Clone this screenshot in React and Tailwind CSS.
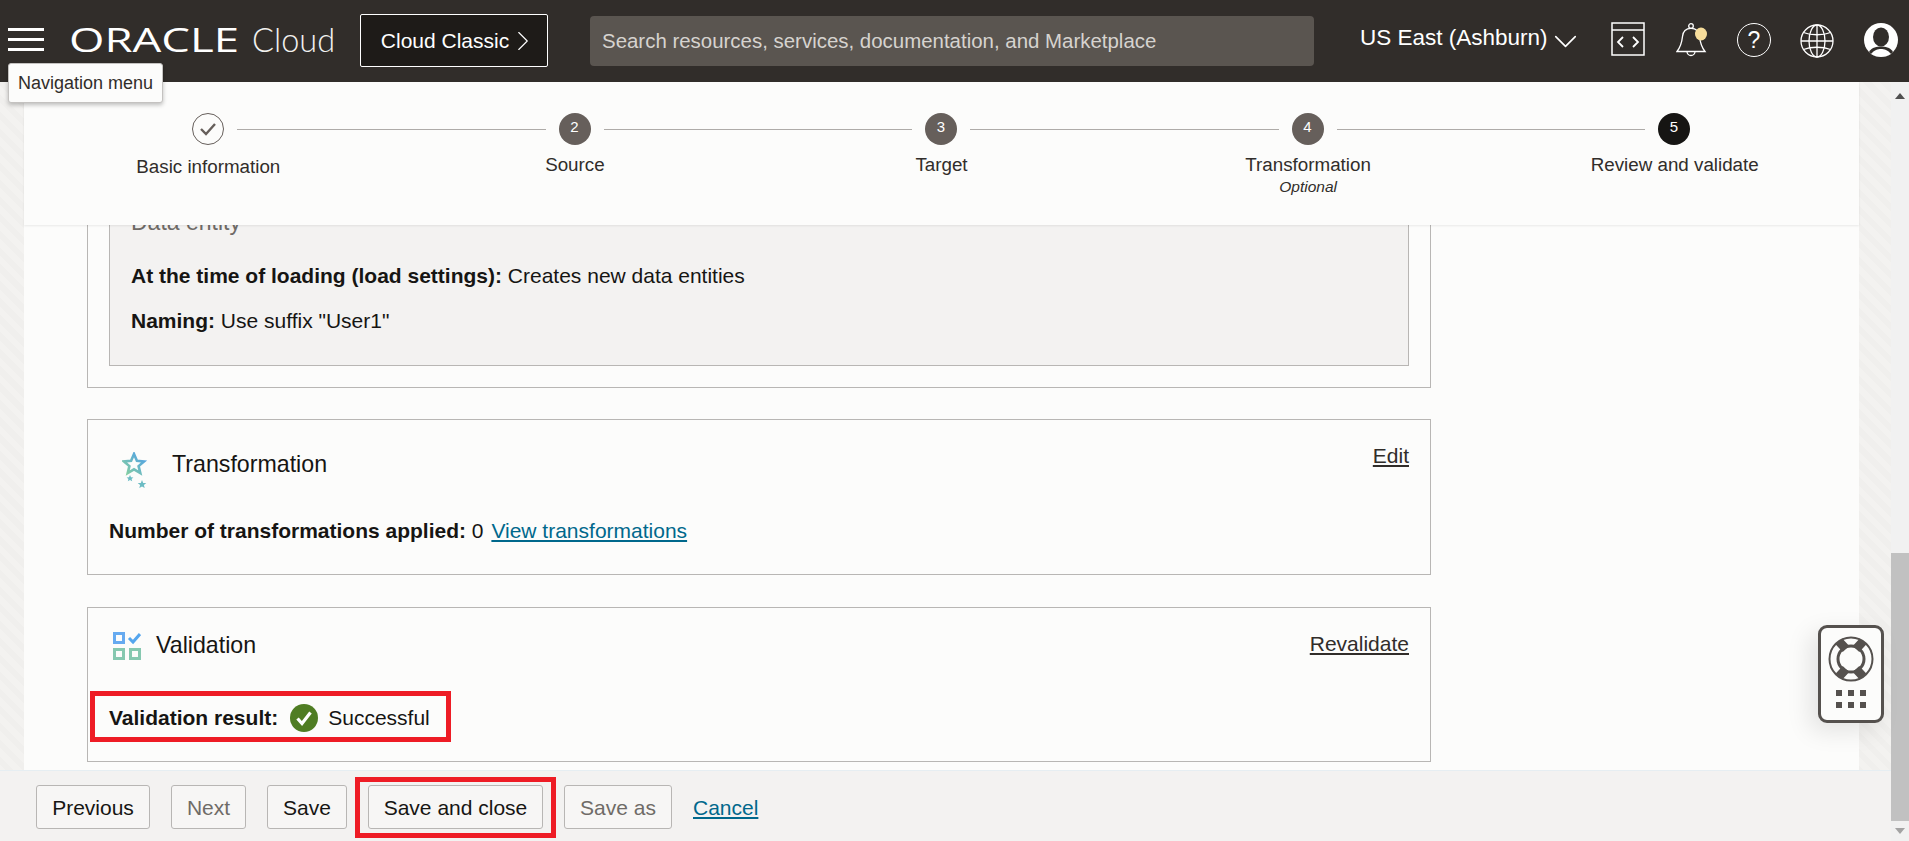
import { ChevronDown, ChevronRight } from "lucide-react";

const STEPS = [
	{ label: "Basic information", done: true },
	{ label: "Source", num: 2 },
	{ label: "Target", num: 3 },
	{ label: "Transformation", num: 4, sub: "Optional" },
	{ label: "Review and validate", num: 5, current: true },
];

function StepCircle({ step }) {
	if (step.done) {
		return (
			<div className="w-8 h-8 shrink-0 rounded-full border border-[#665f5b] flex items-center justify-center">
				<svg width="18" height="14" viewBox="0 0 18 14" fill="none">
					<path d="M2 7l5 5 9-10" stroke="#665f5b" strokeWidth="2.4" />
				</svg>
			</div>
		);
	}
	return (
		<div
			className={`w-8 h-8 shrink-0 rounded-full flex items-center justify-center text-[15px] pb-[3px] ${
				step.current ? "bg-[#161513] text-white" : "bg-[#665f5b] text-white"
			}`}>
			{step.num}
		</div>
	);
}

function Stepper() {
	return (
		<div className="h-[143px] shrink-0 bg-[#fcfcfb] shadow-[0_1px_2px_rgba(0,0,0,0.08)] relative z-10">
			<div className="flex items-center pl-[168px] pr-[169px] pt-[31px]">
				{STEPS.map((step, i) => (
					<div key={step.label} className={`flex items-center ${i < 4 ? "flex-1" : ""}`}>
						<StepCircle step={step} />
						{i < 4 && <div className="flex-1 h-px bg-[#aeaba8] mx-[13px] mt-[1px]" />}
					</div>
				))}
			</div>
			<div className="grid grid-cols-5 w-[1833px] ml-[1px] mt-[8px] text-[18.8px] leading-[24px] text-[#312d2a] text-center">
				{STEPS.map((step) => (
					<div key={step.label} className={step.done ? "pt-[2px]" : ""}>
						<div className="whitespace-nowrap">{step.label}</div>
						{step.sub && <div className="text-[15.5px] leading-[20px] italic">{step.sub}</div>}
					</div>
				))}
			</div>
		</div>
	);
}

function StarIcon() {
	return (
		<svg width="28" height="38" viewBox="0 0 28 38" fill="none">
			<defs>
				<linearGradient id="starGrad" x1="0" y1="1" x2="1" y2="0">
					<stop offset="0" stopColor="#86d0a0" />
					<stop offset="1" stopColor="#4f9fe8" />
				</linearGradient>
			</defs>
			<path d="M12 2l2.900 6.700 7.100.7-5.400 4.700 1.700 7-6.300-3.800-6.300 3.800 1.700-7L2 9.400l7.100-.7z" stroke="url(#starGrad)" strokeWidth="2.6" />
			<path d="M8 23l1 2.200 2.400.2-1.800 1.600.6 2.300-2.200-1.300-2.200 1.300.6-2.300-1.800-1.600 2.400-.2z" fill="#6cbcc4" />
			<path d="M20 28l1.200 2.900 3.100.2-2.400 2 .8 3-2.700-1.700-2.700 1.700.8-3-2.400-2 3.100-.2z" fill="#6cbcc4" />
		</svg>
	);
}

function ValidationIcon() {
	return (
		<svg width="28" height="28" viewBox="0 0 28 28" fill="none">
			<rect x="1.500" y="1.500" width="9" height="9" stroke="#66aaf0" strokeWidth="3" />
			<rect x="1.500" y="17.500" width="9" height="9" stroke="#86c8b0" strokeWidth="3" />
			<rect x="17.500" y="17.500" width="9" height="9" stroke="#86c8b0" strokeWidth="3" />
			<path d="M16 6l4 4 7-8" stroke="#55a6ee" strokeWidth="3" />
		</svg>
	);
}

function Card({ className, children }) {
	return <div className={`border border-[#b8b6b4] shrink-0 ${className}`}>{children}</div>;
}

function ReviewContent() {
	return (
		<div className="flex-1 min-h-0 overflow-hidden flex flex-col justify-end pl-[63px] w-[1407px] pb-[8px] text-[21px] text-[#161513]">
			{/* Target section, scrolled up behind the stepper */}
			<Card className="px-[21px] pb-[21px]">
				<div className="bg-[#f3f2f1] border border-[#b8b6b4] h-[300px] px-[21px] flex flex-col justify-end pb-[31px]">
					<div className="text-[23px] leading-[28px] text-[#6f6b67] mb-[27px]">Data entity</div>
					<p className="leading-[26px] mb-[19px]">
						<b>At the time of loading (load settings):</b> Creates new data entities
					</p>
					<p className="leading-[26px]">
						<b>Naming:</b> Use suffix "User1"
					</p>
				</div>
			</Card>

			<Card className="mt-[31px] h-[156px] px-[21px] pt-[30px]">
				<div className="flex items-start">
					<div className="ml-[13px] mr-[22px] h-[38px] mt-[2px]">
						<StarIcon />
					</div>
					<span className="text-[23.2px] leading-[28px]">Transformation</span>
					<a className="ml-auto -mt-[7px] leading-[26px] underline text-[#312d2a]">Edit</a>
				</div>
				<p className="mt-[28px] leading-[26px]">
					<b>Number of transformations applied:</b> 0{" "}
					<a className="underline text-[#00688c] ml-[2px]">View transformations</a>
				</p>
			</Card>

			<Card className="mt-[32px] h-[155px] px-[21px] pt-[24px]">
				<div className="flex items-center h-[28px]">
					<div className="ml-[4px] mr-[15px] h-[28px]">
						<ValidationIcon />
					</div>
					<span className="text-[23.2px] leading-[28px] -mt-[2px]">Validation</span>
					<a className="ml-auto -mt-[4px] leading-[26px] underline text-[#312d2a]">Revalidate</a>
				</div>
				<div className="mt-[45px] flex items-center h-[26px]">
					<b>Validation result:</b>
					<svg className="ml-[12px] mr-[10px]" width="28" height="28" viewBox="0 0 28 28" fill="none">
						<circle cx="14" cy="14" r="14" fill="#4f7d23" />
						<path d="M7.500 14.500l4.500 5 8.500-11" stroke="#fff" strokeWidth="3.200" />
					</svg>
					<span>Successful</span>
				</div>
			</Card>
		</div>
	);
}

function FooterButton({ children, disabled, className }) {
	return (
		<button
			className={`h-[44px] pt-[1px] border border-[#b8b6b4] rounded-[3px] bg-[#f7f6f5] text-[21px] ${
				disabled ? "bg-[#f1efed] text-[#6f6b67]" : "text-[#161513]"
			} ${className}`}>
			{children}
		</button>
	);
}

function HelpWidget() {
	return (
		<div className="absolute left-[1818px] top-[625px] w-[66px] h-[98px] z-20 bg-[#fcfcfb] border-[3px] border-[#55514e] rounded-[9px] shadow-[-8px_8px_24px_rgba(0,0,0,0.1)] flex flex-col items-center pt-[8px]">
			<svg width="46" height="46" viewBox="0 0 46 46" fill="none">
				<circle cx="23" cy="23" r="21.500" stroke="#55514e" strokeWidth="2" />
				<circle cx="23" cy="23" r="13" stroke="#55514e" strokeWidth="3" />
				<path d="M11 5.500 L18 13 M35 5.500 L28 13 M11 40.500 L18 33 M35 40.500 L28 33" stroke="#55514e" strokeWidth="9" />
			</svg>
			<div className="grid grid-cols-3 gap-x-[6px] gap-y-[6px] mt-[8px]">
				{[0, 1, 2, 3, 4, 5].map((n) => (
					<div key={n} className="w-[6px] h-[6px] bg-[#55514e]" />
				))}
			</div>
		</div>
	);
}

function BellIcon() {
	return (
		<svg width="32" height="34" viewBox="0 0 32 34" fill="none" stroke="#fff" strokeWidth="1.300">
			<circle cx="15" cy="3" r="2.300" />
			<path d="M1 28.500C5.500 23 6 18 6.500 13.500 7 8 10.500 5.300 15 5.300S23 8 23.500 13.500C24 18 24.500 23 29 28.500z" />
			<path d="M11 28.500a4 4 0 0 0 8 0" />
			<ellipse cx="25" cy="11" rx="6" ry="6.500" fill="#f7dd9b" stroke="none" />
		</svg>
	);
}

function GlobeIcon() {
	return (
		<svg className="ml-[29px]" width="34" height="34" viewBox="0 0 34 34" fill="none" stroke="#fff" strokeWidth="1.300">
			<circle cx="17" cy="17" r="16" />
			<ellipse cx="17" cy="17" rx="8" ry="16" />
			<path d="M17 1v32M1 17h32" />
			<path d="M3.500 8.500C11 11.500 23 11.500 30.500 8.500M3.500 25.500C11 22.500 23 22.500 30.500 25.500" />
		</svg>
	);
}

function Header() {
	return (
		<header className="h-[82px] shrink-0 bg-[#312d2a] flex items-center text-white relative z-30">
			<div className="ml-[8px] w-[36px] flex flex-col gap-[7px] mt-[-4px]">
				<div className="h-[3px] bg-white" />
				<div className="h-[3px] bg-white" />
				<div className="h-[3px] bg-white" />
			</div>
			<span className="ml-[25px] w-[171px] text-[33px] leading-none font-medium origin-left scale-x-[1.38] [font-family:'Open_Sans',sans-serif] mt-[-4px]">
				ORACLE
			</span>
			<span className="ml-[12px] text-[32.500px] leading-none font-light [font-family:Lato,sans-serif] text-[#f2f1ef] mt-[-2px] w-[84px] whitespace-nowrap">
				Cloud
			</span>
			<button className="ml-[24px] w-[188px] h-[53px] pl-[7px] bg-[#1e1b18] border border-white rounded-[2px] flex items-center justify-center text-[21px] mt-[-1px] whitespace-nowrap">
				Cloud Classic
				<ChevronRight size={34} strokeWidth={0.8} className="-ml-[3px] -mr-[6px]" />
			</button>
			<div className="ml-[42px] w-[724px] h-[50px] bg-[#5a5550] rounded-[4px] flex items-center pl-[12px] text-[20.450px] text-[#d6d3cf] whitespace-nowrap">
				Search resources, services, documentation, and Marketplace
			</div>
			<span className="ml-[46px] w-[186px] text-[22.500px] mt-[-6px] whitespace-nowrap">US East (Ashburn)</span>
			<ChevronDown size={39} strokeWidth={1} className="mt-[1px]" />
			<svg className="ml-[26px] mt-[-4px]" width="34" height="34" viewBox="0 0 34 34" fill="none" stroke="#fff">
				<rect x="1" y="1" width="32" height="32" strokeWidth="1.500" />
				<path d="M1 8h32" strokeWidth="1.500" />
				<path d="M12 15l-5 5 5 5M22 15l5 5-5 5" strokeWidth="1.800" />
			</svg>
			<div className="ml-[31px] mt-[-2px] w-[30px] h-[34px]">
				<BellIcon />
			</div>
			<div className="ml-[31px] w-[34px] h-[34px] mt-[-2px] rounded-full border-[1.500px] border-white flex items-center justify-center text-[23px] font-light">
				?
			</div>
			<GlobeIcon />
			<svg className="ml-[30px] mt-[-2px]" width="34" height="34" viewBox="0 0 34 34">
				<circle cx="17" cy="17" r="17" fill="#fff" />
				<ellipse cx="17" cy="14" rx="8" ry="9.500" fill="#312d2a" />
				<path d="M5 29c3-5 8-5.500 12-5.500S26 24 29 29c-3 3-7 5-12 5S8 32 5 29z" fill="#312d2a" />
				<path d="M7 31c3-4 7-5 10-5s7 1 10 5c-3 2-6 3-10 3s-7-1-10-3z" fill="#fff" />
			</svg>
		</header>
	);
}

export default function App() {
	return (
		<div className="h-[841px] w-[1909px] overflow-hidden flex flex-col relative bg-[repeating-linear-gradient(45deg,#f3f2f0_0px,#f3f2f0_6px,#f0efed_6px,#f0efed_12px)] [font-family:'Liberation_Sans',Arial,sans-serif]">
			<Header />

			{/* Tooltip for hamburger */}
			<div className="absolute left-[8px] top-[63px] z-40 h-[40px] w-[155px] bg-[#fcfcfb] border border-[#c4c2c0] rounded-[3px] shadow-[0_2px_4px_rgba(0,0,0,0.25)] flex items-center justify-center text-[18px] text-[#312d2a]">
				Navigation menu
			</div>

			<div className="flex-1 min-h-0 flex">
				<div className="flex-1 min-w-0 flex flex-col">
					<div className="flex-1 min-h-0 flex pr-[32px] pl-[24px]">
						<main className="flex-1 min-w-0 bg-[#fcfcfb] flex flex-col">
							<Stepper />
							<ReviewContent />
						</main>
					</div>
					<footer className="h-[71px] shrink-0 bg-[#f3f2f1] border-t border-[#e6eef2] flex items-center pl-[36px] pt-[2px]">
						<FooterButton className="w-[114px]">Previous</FooterButton>
						<FooterButton disabled className="w-[75px] ml-[21px]">
							Next
						</FooterButton>
						<FooterButton className="w-[80px] ml-[21px]">Save</FooterButton>
						<div className="ml-[8px] p-[8px] border-[5px] border-[#ee1c25] h-[61px] flex items-center">
							<FooterButton className="w-[175px] whitespace-nowrap">Save and close</FooterButton>
						</div>
						<FooterButton disabled className="w-[108px] ml-[8px]">
							Save as
						</FooterButton>
						<a className="ml-[21px] pt-[1px] text-[21px] underline text-[#00688c]">Cancel</a>
					</footer>
				</div>
				<div className="w-[18px] shrink-0 bg-[#f1f1f1] flex flex-col items-center">
					<div className="h-[18px] mt-[5px] flex items-center justify-center">
						<div className="w-0 h-0 border-x-[5.500px] border-x-transparent border-b-[6px] border-b-[#505050]" />
					</div>
					<div className="flex-1" />
					<div className="w-[18px] h-[268px] bg-[#c1c1c1]" />
					<div className="h-[20px] flex items-center justify-center">
						<div className="w-0 h-0 border-x-[5.500px] border-x-transparent border-t-[6px] border-t-[#a3a3a3]" />
					</div>
				</div>
			</div>

			<HelpWidget />

			{/* Red highlight around validation result */}
			<div className="absolute left-[90px] top-[691px] w-[361px] h-[51px] border-[5px] border-[#ee1c25] pointer-events-none z-20" />
		</div>
	);
}
